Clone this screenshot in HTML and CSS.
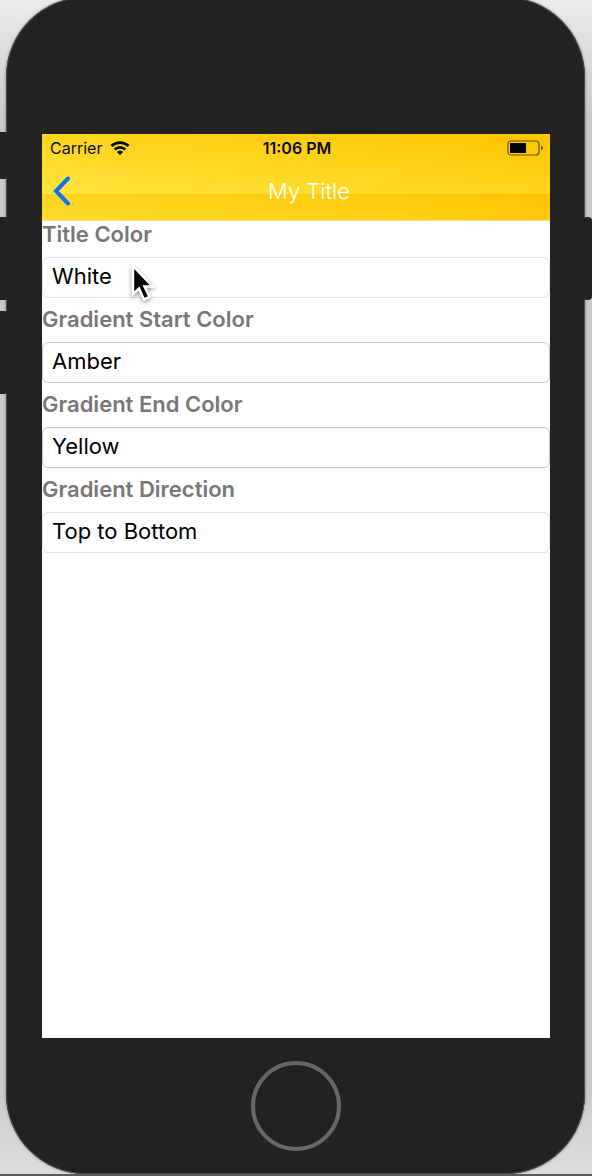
FILE: index.html
```
<!DOCTYPE html>
<html lang="en">
<head>
<meta charset="utf-8">
<meta name="viewport" content="width=device-width, initial-scale=1">
<title>My Title</title>
<link rel="stylesheet" href="styles.css">
</head>
<body>
<div class="stage">
  <div class="device">
    <span class="side-key side-key--mute"></span>
    <span class="side-key side-key--up"></span>
    <span class="side-key side-key--down"></span>
    <span class="side-key side-key--power"></span>
    <div class="screen">
      <header class="top">
        <div class="status">
          <div class="status-left">
            <span>Carrier</span>
            <svg class="wifi" viewBox="0 0 20 14" width="20" height="14" aria-hidden="true">
              <path d="M1.4 5.1a12.3 12.3 0 0 1 17.2 0" fill="none" stroke="#0c0c04" stroke-width="2.8"/>
              <path d="M4.7 8.5a7.6 7.6 0 0 1 10.600 0" fill="none" stroke="#0c0c04" stroke-width="2.6"/>
              <path d="M10 14l-3-3.100a4.300 4.300 0 0 1 6 0z" fill="#0c0c04"/>
            </svg>
          </div>
          <span class="clock">11:06 PM</span>
          <svg class="battery" viewBox="0 0 37 16" width="37" height="16" aria-hidden="true">
            <rect x="1" y="1" width="31" height="14" rx="3" fill="none" stroke="#6b5608" stroke-width="1.2"/>
            <rect x="3" y="3" width="16" height="10" fill="#000"/>
            <path d="M34 5.600c2.600 1 2.600 3.800 0 4.800z" fill="#6b5608"/>
          </svg>
        </div>
        <nav class="nav">
          <button class="back" type="button" aria-label="Back">
            <svg viewBox="0 0 18 30" width="18" height="30" aria-hidden="true">
              <path d="M15 2.500L3 15l12 12.500" fill="none" stroke="#0a74f2" stroke-width="4" stroke-linecap="round" stroke-linejoin="miter"/>
            </svg>
          </button>
          <h1 class="title">My Title</h1>
        </nav>
      </header>
      <main class="form">
        <div class="field">
          <label for="title-color">Title Color</label>
          <select id="title-color" class="faint"><option>White</option></select>
        </div>
        <div class="field">
          <label for="start-color">Gradient Start Color</label>
          <select id="start-color"><option>Amber</option></select>
        </div>
        <div class="field">
          <label for="end-color">Gradient End Color</label>
          <select id="end-color"><option>Yellow</option></select>
        </div>
        <div class="field">
          <label for="direction">Gradient Direction</label>
          <select id="direction" class="faint"><option>Top to Bottom</option></select>
        </div>
        <svg class="pointer" viewBox="0 0 28 42" width="28" height="42" aria-hidden="true">
          <path d="M4 3v28l6-5.500 5 11 5.500-2.500-5-10.500h8z" fill="#000" stroke="#fff" stroke-width="2.500"/>
        </svg>
      </main>
    </div>
    <button class="home" type="button" aria-label="Home"></button>
  </div>
</div>
</body>
</html>
```
FILE: styles.css
```
* {
  box-sizing: border-box;
}

body {
  margin: 0;
  font-family: Inter, "Liberation Sans", sans-serif;
  color: #000;
}

.stage {
  display: flex;
  min-height: 100vh;
  padding: 0 7px 0 6px;
  overflow: hidden;
  border-bottom: 2px solid #5c5a5c;
  background: linear-gradient(#ececec 0, #c9c9c9 120px, #c9c9c9 calc(100% - 90px), #dedede 100%);
}

.device {
  position: relative;
  flex: 1;
  display: flex;
  flex-direction: column;
  align-items: stretch;
  margin-top: -3px;
  padding: 137px 35px 23px 36px;
  border-radius: 80px;
  background: #222;
  box-shadow: inset 0 0 0 1px #4a4a4a, 0 0 3px #777;
}

.side-key {
  position: absolute;
  left: -12px;
  width: 13px;
  height: 83px;
  border-radius: 2px;
  background: #222;
}

.side-key--mute {
  top: 135px;
  height: 47px;
}

.side-key--up {
  top: 220px;
}

.side-key--down {
  top: 314px;
}

.side-key--power {
  top: 220px;
  right: -7px;
  left: auto;
  width: 9px;
  border-radius: 4px;
}

.screen {
  flex: 1;
  background: #fff;
}

.top {
  background: linear-gradient(to bottom left, #fdc300, #ffe53c) 0 0 / 100% 60px repeat-y;
}

.status {
  display: grid;
  grid-template-columns: 1fr auto 1fr;
  align-items: center;
  height: 28px;
  padding: 0 6px 0 8px;
  font-size: 16px;
  color: #0c0c04;
}

.status-left {
  display: flex;
  align-items: center;
  gap: 8px;
}

.clock {
  font-weight: 600;
}

.battery {
  justify-self: end;
}

.nav {
  display: grid;
  grid-template-columns: 48px 1fr 48px;
  align-items: center;
  height: 59px;
  border-bottom: 1px solid #f3dc83;
}

.back {
  display: flex;
  padding: 0 0 0 11px;
  border: 0;
  background: none;
}

.title {
  grid-column: 2;
  margin: 0 0 0 26px;
  font-size: 22px;
  font-weight: 300;
  line-height: 28px;
  text-align: center;
  color: #fff;
}

.form {
  position: relative;
  display: flex;
  flex-direction: column;
  gap: 8px;
}

.field {
  display: flex;
  flex-direction: column;
  gap: 10px;
}

.field label {
  font-size: 22px;
  font-weight: 600;
  line-height: 26px;
  color: #777;
}

.field select {
  width: 100%;
  height: 41px;
  padding: 0 9px 4px;
  border: 1px solid #c4c4c4;
  border-radius: 6px;
  background: #fff;
  color: #000;
  font: inherit;
  font-size: 22px;
  appearance: none;
}

.field .faint {
  border-color: #e2e2e2;
}

.pointer {
  position: absolute;
  top: 42px;
  left: 87px;
  filter: drop-shadow(0 2px 2px rgb(0 0 0 / 40%));
}

.home {
  align-self: center;
  width: 90px;
  height: 90px;
  margin-top: 23px;
  border: 4px solid #666;
  border-radius: 50%;
  background: none;
}
```
